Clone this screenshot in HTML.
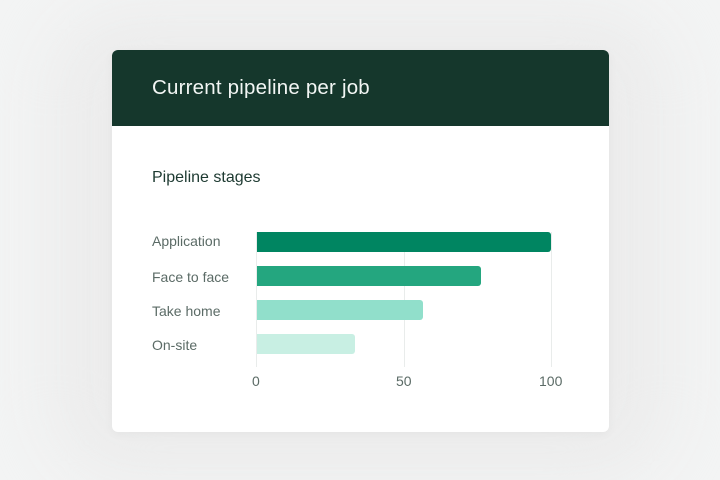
<!DOCTYPE html>
<html><head><style>
body{margin:0;width:720px;height:480px;background:#f3f4f4;font-family:"Liberation Sans",sans-serif;position:relative;overflow:hidden}
.glow{position:absolute;left:50px;top:10px;width:620px;height:470px;border-radius:80px;background:#ececec;filter:blur(30px)}
.card{position:absolute;left:112px;top:50px;width:497px;height:382px;background:#fff;border-radius:6px;overflow:hidden;box-shadow:0 2px 10px rgba(0,0,0,0.04)}
.hd{height:76px;background:#15372c;color:#f2f6f4;font-size:20.5px;line-height:76px;padding-left:40px;letter-spacing:0.2px}
.abs{position:absolute}
.st{left:40px;top:119px;font-size:16px;color:#1d3a31}
.lab{left:40px;font-size:14px;color:#5b6b66}
.bar{left:145px;height:20px;border-radius:0 3px 3px 0}
.grid{width:1px;background:#e9eceb;top:182px;height:135px}
.ax{font-size:14px;color:#5b6b66;top:323px}
</style></head><body>
<div class="glow"></div>
<div class="card">
<div class="hd">Current pipeline per job</div>
<div class="abs st">Pipeline stages</div>
<div class="abs grid" style="left:144px"></div>
<div class="abs grid" style="left:292px"></div>
<div class="abs grid" style="left:439px"></div>
<div class="abs lab" style="top:183px">Application</div>
<div class="abs lab" style="top:219px">Face to face</div>
<div class="abs lab" style="top:253px">Take home</div>
<div class="abs lab" style="top:287px">On-site</div>
<div class="abs bar" style="top:182px;width:294px;background:#008561"></div>
<div class="abs bar" style="top:216px;width:224px;background:#24a67f"></div>
<div class="abs bar" style="top:250px;width:166px;background:#91dfcb"></div>
<div class="abs bar" style="top:284px;width:98px;background:#c8efe3"></div>
<div class="abs ax" style="left:140px">0</div>
<div class="abs ax" style="left:284px">50</div>
<div class="abs ax" style="left:427px">100</div>
</div>
</body></html>
